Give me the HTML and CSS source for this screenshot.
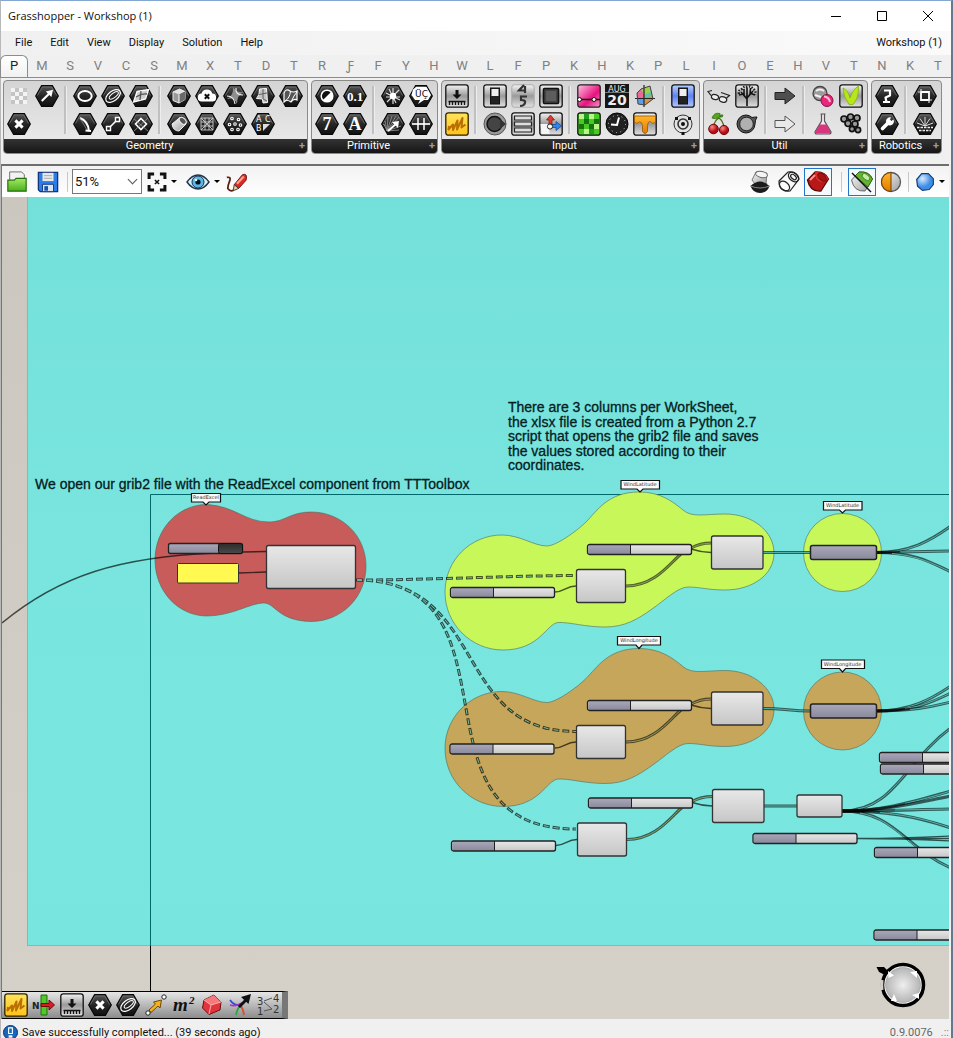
FILE: index.html
```html
<!DOCTYPE html>
<html lang="en">
<head>
<meta charset="utf-8">
<title>Grasshopper - Workshop (1)</title>
<link rel="stylesheet" href="styles.css">
</head>
<body>
<svg class="paints" width="0" height="0" aria-hidden="true">
  <defs>
    <linearGradient id="gHex" x1="0" y1="0" x2="0" y2="1"><stop offset="0" stop-color="#555"/><stop offset=".5" stop-color="#262626"/><stop offset="1" stop-color="#111"/></linearGradient>
    <linearGradient id="gTile" x1="0" y1="0" x2="0" y2="1"><stop offset="0" stop-color="#f4f4f4"/><stop offset=".5" stop-color="#9a9a9a"/><stop offset="1" stop-color="#e2e2e2"/></linearGradient>
    <linearGradient id="gYel" x1="0" y1="0" x2="0" y2="1"><stop offset="0" stop-color="#ffe45c"/><stop offset="1" stop-color="#ffc21a"/></linearGradient>
    <linearGradient id="gPink" x1="0" y1="0" x2="1" y2="1"><stop offset="0" stop-color="#ffc4e2"/><stop offset=".6" stop-color="#e6127e"/><stop offset="1" stop-color="#f79aca"/></linearGradient>
    <linearGradient id="gBlue" x1="0" y1="0" x2="0" y2="1"><stop offset="0" stop-color="#bcd0ff"/><stop offset=".5" stop-color="#5f83f0"/><stop offset="1" stop-color="#b4c6ff"/></linearGradient>
    <linearGradient id="gGreen" x1="0" y1="0" x2="0" y2="1"><stop offset="0" stop-color="#a4e860"/><stop offset="1" stop-color="#4bb01e"/></linearGradient>
    <linearGradient id="gOrange" x1="0" y1="0" x2="0" y2="1"><stop offset="0" stop-color="#ffb52a"/><stop offset="1" stop-color="#e07a00"/></linearGradient>
    <linearGradient id="gSteel" x1="0" y1="0" x2="1" y2="1"><stop offset="0" stop-color="#fafafa"/><stop offset="1" stop-color="#9c9c9c"/></linearGradient>
    <linearGradient id="gNode" x1="0" y1="0" x2="0" y2="1"><stop offset="0" stop-color="#e8e8e8"/><stop offset="1" stop-color="#c6c6c6"/></linearGradient>
    <linearGradient id="gKnob" x1="0" y1="0" x2="0" y2="1"><stop offset="0" stop-color="#aaa9ba"/><stop offset="1" stop-color="#8a899c"/></linearGradient>
    <linearGradient id="gDark" x1="0" y1="0" x2="0" y2="1"><stop offset="0" stop-color="#2c2c2c"/><stop offset="1" stop-color="#4a4a4a"/></linearGradient>
    <linearGradient id="gCyan" x1="0" y1="0" x2="0" y2="1"><stop offset="0" stop-color="#73e0d9"/><stop offset=".5" stop-color="#7ae5df"/><stop offset="1" stop-color="#78e6df"/></linearGradient>
    <radialGradient id="gDial"><stop offset="0" stop-color="#efefef"/><stop offset="1" stop-color="#b5b5b5"/></radialGradient>
    <radialGradient id="gBall" cx=".35" cy=".3"><stop offset="0" stop-color="#d8ecff"/><stop offset="1" stop-color="#3f8ee6"/></radialGradient>
    <radialGradient id="gRed" cx=".35" cy=".3"><stop offset="0" stop-color="#ff8a8a"/><stop offset="1" stop-color="#b80d14"/></radialGradient>
  </defs>
</svg>
<svg class="sprite" aria-hidden="true">
  <symbol id="hex" viewBox="0 0 24 24"><path d="M.7 12 6.6 1.7H17.4L23.3 12 17.4 22.3H6.6Z" fill="url(#gHex)" stroke="#080808" stroke-width="1.2"/><path d="M2.4 11.5 7.3 3H16.7L21.6 11.5" fill="none" stroke="#777" stroke-width=".7"/></symbol>
  <symbol id="tile" viewBox="0 0 24 24"><rect x=".8" y=".8" width="22.4" height="22.4" rx="2.5" fill="url(#gTile)" stroke="#111" stroke-width="1.3"/></symbol>

  <symbol id="checker" viewBox="0 0 24 24"><path d="M4 4h16v16H4z" fill="#fff" opacity=".7"/><path d="M8 4h4v4H8zM16 4h4v4h-4zM4 8h4v4H4zM12 8h4v4h-4zM8 12h4v4H8zM16 12h4v4h-4zM4 16h4v4H4zM12 16h4v4h-4z" fill="#c4c4c4"/></symbol>
  <symbol id="vec" viewBox="0 0 24 24"><use href="#hex"/><path d="M7.500 17.800 6 16.300 12.800 9.600 10.800 7.600 18 5.800 16.400 13 14.300 11Z" fill="#fff"/></symbol>
  <symbol id="cross" viewBox="0 0 24 24"><use href="#hex"/><path d="M8.400 8.400 15.600 15.600M15.600 8.400 8.400 15.600" stroke="#fff" stroke-width="3"/></symbol>
  <symbol id="circ" viewBox="0 0 24 24"><use href="#hex"/><ellipse cx="12" cy="12" rx="6.700" ry="5" fill="none" stroke="#fff" stroke-width="2"/></symbol>
  <symbol id="arc" viewBox="0 0 24 24"><use href="#hex"/><path d="M7 6Q15 9 16 19M12.500 18.500 18 19" fill="none" stroke="#fff" stroke-width="2"/><path d="M7 6 14 18" stroke="#999" stroke-width=".7"/></symbol>
  <symbol id="ellip" viewBox="0 0 24 24"><use href="#hex"/><g transform="rotate(-38 12 12)" fill="none" stroke="#fff"><ellipse cx="12" cy="12" rx="8.500" ry="4.800" stroke-width="1.200"/><ellipse cx="13" cy="12" rx="5.500" ry="2.200" stroke-width="1"/></g></symbol>
  <symbol id="seg" viewBox="0 0 24 24"><use href="#hex"/><path d="M8 16 16 8" stroke="#fff" stroke-width="1.600"/><path d="M5.500 14.500h4v4h-4zM14.500 5.500h4v4h-4z" fill="#222" stroke="#fff" stroke-width="1.400"/></symbol>
  <symbol id="surf" viewBox="0 0 24 24"><use href="#hex"/><path d="M8 7.500 19.500 5.500 16.500 15 4.500 18Z" fill="#ccc" stroke="#fff" stroke-width="1.300"/><path d="M12 7 11 16M7 13Q13 9 18 10" stroke="#555" stroke-width="1.300" fill="none"/></symbol>
  <symbol id="plane" viewBox="0 0 24 24"><use href="#hex"/><path d="M12 6.500 17.500 12 12 17.500 6.500 12Z" fill="#333" stroke="#fff" stroke-width="1.600"/><path d="M5 7 19 19M19 6 5 19" stroke="#999" stroke-width=".8"/></symbol>
  <symbol id="box" viewBox="0 0 24 24"><use href="#hex"/><path d="M6 8 12.500 5 18 7.500V15.500L12 19 6 16.500Z" fill="#999" stroke="#eee"/><path d="M6 8 12.500 5 18 7.500 12 10.500Z" fill="#e4e4e4"/><path d="M12 10.500 18 7.500V15.500L12 19Z" fill="#6a6a6a"/><path d="M12 10.500V19" stroke="#fff"/></symbol>
  <symbol id="cyl" viewBox="0 0 24 24"><use href="#hex"/><path d="M5 12 13 5.500Q20 7 19 12L12 19Q6 19 5 12Z" fill="url(#gSteel)" stroke="#eee"/><ellipse cx="15.700" cy="8.800" rx="4" ry="2.700" transform="rotate(45 15.700 8.800)" fill="#555" stroke="#eee"/></symbol>
  <symbol id="cloud" viewBox="0 0 24 24"><use href="#hex"/><path d="M7 17.500a4 4 0 0 1-.5-8 5.600 5.600 0 0 1 10.800 0A4 4 0 0 1 17 17.500Z" fill="#fff"/><path d="M9.800 10.200 14.200 14.800M14.200 10.200 9.800 14.800" stroke="#111" stroke-width="2"/></symbol>
  <symbol id="mesh" viewBox="0 0 24 24"><use href="#hex"/><path d="M6 6h12v12H6zM6 10h12M6 14h12M10 6v12M14 6v12M6 6 18 18M18 6 6 18" fill="none" stroke="#ccc" stroke-width=".9"/></symbol>
  <symbol id="star" viewBox="0 0 24 24"><use href="#hex"/><path d="M10 3Q13 9 20.500 8 14 11 14 20 11 13 4 15 11 11 10 3Z" fill="#8f8f8f"/><path d="M13 4Q12 11 20 11M4 12Q11 12 12 20" stroke="#eee" stroke-width="1.200" fill="none"/></symbol>
  <symbol id="pts" viewBox="0 0 24 24"><use href="#hex"/><g fill="none" stroke="#fff" stroke-width="1.100"><circle cx="9" cy="6.500" r="1.300"/><circle cx="15.500" cy="7.500" r="1.300"/><circle cx="6.500" cy="12.500" r="1.300"/><circle cx="12" cy="12" r="1.300"/><circle cx="17.500" cy="13" r="1.300"/><circle cx="9" cy="17.500" r="1.300"/><circle cx="15" cy="17.500" r="1.300"/></g></symbol>
  <symbol id="twist" viewBox="0 0 24 24"><use href="#hex"/><path d="M8.500 5 15.500 4.500 16.500 18.500 12 19 11.500 15 5.500 14.500Q9 11 8.500 5Z" fill="#c4c4c4" stroke="#fff"/><path d="M12 5V15L16 17M8 10.500 16 9" stroke="#555" stroke-width=".9" fill="none"/></symbol>
  <symbol id="abc" viewBox="0 0 24 24"><use href="#hex"/><g class="i-sans" fill="#fff" font-size="8"><text x="5" y="10">A</text><text x="14" y="10">C</text><text x="5" y="19">B</text></g><path d="M12 12h7l-7 7z" fill="#ddd"/></symbol>
  <symbol id="brep" viewBox="0 0 24 24"><use href="#hex"/><path d="M5 9Q7 4 11 7 14 9 18 7V16Q15 14 12 18 8 15 5 18Z" fill="#555" stroke="#fff" stroke-width="1.200"/><path d="M6 17Q11 14 11.500 7M12 18Q15 11 18 8" stroke="#fff" fill="none"/></symbol>

  <symbol id="bool" viewBox="0 0 24 24"><use href="#hex"/><circle cx="12" cy="12" r="5.800" fill="#111" stroke="#fff" stroke-width="1.500"/><path d="M16.100 7.900A5.800 5.800 0 0 1 7.900 16.100Z" fill="#fff"/></symbol>
  <symbol id="num" viewBox="0 0 24 24"><use href="#hex"/><text class="i-serif" x="12" y="16.500" font-size="13" text-anchor="middle" fill="#fff">0.1</text></symbol>
  <symbol id="seven" viewBox="0 0 24 24"><use href="#hex"/><text class="i-serif" x="12" y="18" font-size="18" text-anchor="middle" fill="#fff">7</text></symbol>
  <symbol id="txt" viewBox="0 0 24 24"><use href="#hex"/><text class="i-serif" x="12" y="18" font-size="18" text-anchor="middle" fill="#fff">A</text></symbol>
  <symbol id="burst" viewBox="0 0 24 24"><use href="#hex"/><path d="M12 4v16M5 9l14 7M18 6 6 18M5 13h14M8 5l7 14" stroke="#ddd" stroke-width="1.200"/><circle cx="12" cy="12" r="3.200" fill="#fff"/></symbol>
  <symbol id="uc" viewBox="0 0 24 24"><use href="#hex"/><path d="M4 5.500 7 3h10.500l4.500 8-3 5h-4l-6 4 2-4H6L2.500 11Z" fill="#fff"/><text class="i-sans" x="12.500" y="13" font-size="9" text-anchor="middle" fill="#111">ÜÇ</text></symbol>
  <symbol id="ray" viewBox="0 0 24 24"><use href="#hex"/><path d="M6 19 3 12M6 19 4 9M6 19 7 5M6 19 11 4M6 19 15 4M6 19 18 5M6 19 20 14M6 19 18 18M4 14 2 12" stroke="#999" stroke-width=".8"/><path d="M7 19 15 12" stroke="#fff" stroke-width="2"/><path d="M11 10 18 9 17 16Z" fill="#fff"/></symbol>
  <symbol id="dom" viewBox="0 0 24 24"><use href="#hex"/><path d="M3 12h18" stroke="#ddd" stroke-width="2"/><path d="M9 6v12M15 6v12" stroke="#fff" stroke-width="1.500"/></symbol>

  <symbol id="press" viewBox="0 0 24 24"><use href="#tile"/><path d="M10.500 6h3v4.500H16.500L12 15 7.500 10.500H10.500Z" fill="#111"/><path d="M3.500 17.500h17M4.500 18v3M7.500 18v3M10.500 18v3M13.500 18v3M16.500 18v3M19.500 18v3" stroke="#111" stroke-width="1.300"/></symbol>
  <symbol id="doodle" viewBox="0 0 24 24"><rect x=".8" y=".8" width="22.400" height="22.400" rx="2.500" fill="url(#gYel)" stroke="#2c2000" stroke-width="1.300"/><path d="M4 14 3.500 17.500 8 12.500 8 18 12.500 8.500 12 17.500 17.500 6 16.500 15.500 20.500 12.500" fill="none" stroke="#b97000" stroke-width="2" stroke-linejoin="round"/></symbol>
  <symbol id="switch" viewBox="0 0 24 24"><use href="#tile"/><rect x="7.500" y="4" width="9" height="16" fill="#222" stroke="#111"/><rect x="8.500" y="5" width="7" height="7" fill="#eee"/></symbol>
  <symbol id="knob" viewBox="0 0 24 24"><circle cx="12" cy="12" r="11" fill="#999" stroke="#555"/><circle cx="11.500" cy="12" r="7.500" fill="#444" stroke="#111" stroke-width="1.500"/><path d="M17 7 23 12 17 17z" fill="#333"/></symbol>
  <symbol id="digit" viewBox="0 0 24 24"><rect x=".8" y=".8" width="22.400" height="22.400" rx="2.500" fill="url(#gTile)" stroke="#aaa"/><path d="M13 1 8 6.500h7M14 2v7M16 12.500h-6v3.500q5 0 4 3-1 3-5 3" fill="none" stroke="#333" stroke-width="2.200"/></symbol>
  <symbol id="list" viewBox="0 0 24 24"><use href="#tile"/><path d="M3.500 4h17v4h-17zM3.500 10h17v4h-17zM3.500 16h17v4h-17z" fill="#ddd" stroke="#222" stroke-width="1.200"/></symbol>
  <symbol id="panel" viewBox="0 0 24 24"><use href="#tile"/><rect x="4.500" y="4.500" width="15" height="15" rx="1" fill="#444" stroke="#111" stroke-width="1.600"/><rect x="7" y="7" width="10" height="10" fill="#5d5d5d"/></symbol>
  <symbol id="md" viewBox="0 0 24 24"><use href="#tile"/><path d="M1.500 12h9v10h-8z" fill="#f5f5f5"/><path d="M10 13V8H7.500L11.500 3l4 5H13v5" fill="#e23a2a" stroke="#7a150c" stroke-width=".7"/><path d="M13 12.500h4V9.500L22.500 14 17 18.500V15.500h-4" fill="#2e86ee" stroke="#123e82" stroke-width=".7"/><circle cx="11" cy="14.500" r="2.600" fill="#fff" stroke="#222"/></symbol>
  <symbol id="graph" viewBox="0 0 24 24"><rect x=".8" y=".8" width="22.400" height="22.400" rx="2.500" fill="url(#gPink)" stroke="#222" stroke-width="1.300"/><path d="M1 15.500h22" stroke="#111" stroke-width="1.300"/><circle cx="2.500" cy="15.500" r="2" fill="#fff" stroke="#111"/><circle cx="17" cy="15.500" r="2" fill="#fff" stroke="#111"/></symbol>
  <symbol id="pixel" viewBox="0 0 24 24"><rect x=".8" y=".8" width="22.400" height="22.400" rx="2.500" fill="#48c924" stroke="#111" stroke-width="1.300"/><path d="M2 2h5v5H2zM12 2h5v5h-5zM17 12h5v5h-5zM7 17h5v5H7z" fill="#baf58a"/><path d="M7 7h5v5H7zM2 12h5v5H2zM17 7h5v5h-5zM12 12h5v5h-5z" fill="#15720f"/><path d="M12 17h5v5h-5zM7 2h5v5H7z" fill="#1da01a"/></symbol>
  <symbol id="cal" viewBox="0 0 24 24"><path d="M0 0h24v24H0z" fill="#161616"/><path d="M0 8.500h24" stroke="#777"/><text class="i-sans" x="12" y="7.500" font-size="8" text-anchor="middle" fill="#eee">AUG</text><text class="i-bold" x="12" y="21" font-size="14" text-anchor="middle" fill="#eee">20</text></symbol>
  <symbol id="clock" viewBox="0 0 24 24"><circle cx="12" cy="12" r="11" fill="#222" stroke="#050505"/><circle cx="12" cy="12" r="8.500" fill="none" stroke="#ccc" stroke-dasharray="1 3.450"/><path d="M14 5.500 12 13 6 12.500" stroke="#fff" stroke-width="2" fill="none"/></symbol>
  <symbol id="swatch" viewBox="0 0 24 24"><path d="M4 9 8 5 17 2 20 15 12 21 5 20Z" fill="#5ec6a8"/><path d="M8 5 17 2 18 8 11 11Z" fill="#9ccf4e"/><path d="M4 9 8 5 11 11V20L5 20Z" fill="#e86a9a"/><path d="M11 14 19 12 20 15 12 21Z" fill="#ea8d3a"/><path d="M5 15H11V20.500L5 20Z" fill="#5aa0e8"/><path d="M11 1v22M2 14.500h20" stroke="#222" stroke-width="1.200"/><path d="M4 9 8 5 17 2 20 15 12 21 5 20Z" fill="none" stroke="#444"/></symbol>
  <symbol id="honey" viewBox="0 0 24 24"><use href="#tile"/><path d="M1.500 4h21v6q-3 3-5-.5-3 0-3 4v6q-2.500 4-5 0v-6q-1-4-3-3.500-3 3-5 0z" fill="url(#gOrange)" stroke="#9c5600" stroke-width=".8"/></symbol>
  <symbol id="lever" viewBox="0 0 24 24"><rect x=".8" y=".8" width="22.400" height="22.400" rx="2.500" fill="url(#gBlue)" stroke="#111" stroke-width="1.300"/><rect x="7.500" y="4" width="9" height="16" fill="#222" stroke="#111"/><rect x="8.500" y="5" width="7" height="7" fill="#eee"/></symbol>
  <symbol id="target" viewBox="0 0 24 24"><g fill="none" stroke="#333"><circle cx="12" cy="12" r="9"/><circle cx="12" cy="12" r="5" stroke-width="1.600"/></g><circle cx="12" cy="12" r="2" fill="#111"/><path d="M4 5h3v3H4zM17 5h3v3h-3zM10.500 20h3v3h-3z" fill="#111"/></symbol>

  <symbol id="glasses" viewBox="0 0 24 24"><g fill="#fff" fill-opacity=".5" stroke="#222" stroke-width="1.200"><ellipse cx="8" cy="13" rx="3.600" ry="2.500" transform="rotate(15 8 13)"/><ellipse cx="16" cy="15.500" rx="3.800" ry="2.700" transform="rotate(15 16 15.500)"/><path d="M4.500 12 1 7.500 5 6.500M19.500 14 22.500 11.500 14 8.500" fill="none"/></g></symbol>
  <symbol id="cherry" viewBox="0 0 24 24"><path d="M12 6Q7 9 6.500 15M12 6Q16 9 17 15" fill="none" stroke="#4c6b12" stroke-width="1.300"/><path d="M13 5Q8 8 5 6 7 0 13 1.500ZM13 5Q13 2 16 3 16 6 13 5Z" fill="#52a81f" stroke="#2b6a0f" stroke-width=".7"/><circle cx="6.500" cy="17" r="4.800" fill="url(#gRed)" stroke="#70090c"/><circle cx="17" cy="18" r="4.600" fill="url(#gRed)" stroke="#70090c"/></symbol>
  <symbol id="tree" viewBox="0 0 24 24"><use href="#tile"/><path d="M12 22V12M12 15 6 8M12 14 18 7M12 12V4M8 10 4 11M16 9.500 20 11M9 11 9 5M15 10.500 15.500 4" stroke="#111" stroke-width="1.600" fill="none"/><path d="M4 10Q3 6 7 5 9 2 12 3 16 1.500 18 5 21.500 7 20 10.500" fill="none" stroke="#222" stroke-width="2.400" stroke-dasharray="1.500 1.300"/></symbol>
  <symbol id="ring" viewBox="0 0 24 24"><path d="M11 3a9 9 0 1 0 9 9q0-4 2-7-3 0-5 .5A9 9 0 0 0 11 3Z" fill="#555" stroke="#111"/><circle cx="11.500" cy="12" r="6.800" fill="#b0b0b0" stroke="#222"/></symbol>
  <symbol id="arrowD" viewBox="0 0 24 24"><path d="M2 8.500h10V4l10 8-10 8v-4.500H2z" fill="#4f4f4f" stroke="#222"/></symbol>
  <symbol id="arrowL" viewBox="0 0 24 24"><path d="M2 8.500h10V4l10 8-10 8v-4.500H2z" fill="#e9e9e9" stroke="#555"/></symbol>
  <symbol id="pills" viewBox="0 0 24 24"><circle cx="9" cy="9.500" r="7" fill="#9c9c9c" stroke="#444" stroke-width="1.300"/><path d="M5 7Q9 4 13 7M4 11 10 13" stroke="#f2f2f2" stroke-width="2" fill="none"/><circle cx="16" cy="16.500" r="6" fill="#e8267e" stroke="#811043"/><path d="M13 12.500Q18 13 19 18" stroke="#fbc" stroke-width="2" fill="none"/></symbol>
  <symbol id="flask" viewBox="0 0 24 24"><path d="M9.500 2h5M10.500 2v7L4 20q0 2 2 2h12q2 0 2-2L13.500 9V2" fill="#f4e6ee" stroke="#555" stroke-width="1.200"/><path d="M8.500 12.500h7L19.500 20q0 1.500-1.500 1.500H6Q4.500 21.500 4.500 20Z" fill="#d9347f"/></symbol>
  <symbol id="sprout" viewBox="0 0 24 24"><use href="#tile"/><path d="M10 20.500Q4 12 4 4 9 6 11 14 14 5 19.500 2 20 14 14 20.500Z" fill="#b6e61c" stroke="#7eaa0a" stroke-width=".7"/></symbol>
  <symbol id="bubbles" viewBox="0 0 24 24"><g fill="#999" stroke="#111" stroke-width="1.700"><circle cx="5" cy="7" r="3"/><circle cx="11.500" cy="5" r="3"/><circle cx="18" cy="6" r="3"/><circle cx="9" cy="11.500" r="3"/><circle cx="16" cy="12" r="3"/><circle cx="13" cy="17" r="2.600"/><circle cx="19" cy="18" r="2.600"/></g></symbol>
  <symbol id="robot" viewBox="0 0 24 24"><use href="#hex"/><path d="M8 18h7M11.500 18 10.500 13.500 15 11.500V6.500H9" fill="none" stroke="#fff" stroke-width="2.200" stroke-linejoin="round"/></symbol>
  <symbol id="wrench" viewBox="0 0 24 24"><use href="#hex"/><path d="M7.500 16.500 14.500 9.500" stroke="#fff" stroke-width="3.600" stroke-linecap="round"/><path d="M18.500 7.500 15.500 9.500 14.500 8.500 16 5.500A4 4 0 1 0 18.500 7.500Z" fill="#fff"/></symbol>
  <symbol id="frame" viewBox="0 0 24 24"><use href="#hex"/><path d="M8 8h8v8H8z" fill="none" stroke="#fff" stroke-width="1.800"/><path d="M5 8h3M8 5v3M16 16h3M16 16v3" stroke="#ddd" stroke-width="1.200"/></symbol>
  <symbol id="spark" viewBox="0 0 24 24"><use href="#hex"/><path d="M12 14V5M12 14 7 6.500M12 14 17 6.500M12 14 4 11M12 14 20 11" stroke="#ddd" stroke-width="1"/><path d="M4 15.500h16M6 18.500h12" stroke="#eee" stroke-width="1.400" stroke-dasharray="2.500 1"/></symbol>

  <symbol id="open" viewBox="0 0 24 24"><path d="M4 1h13l3 3v12H4z" fill="#f2f2f2" stroke="#666"/><path d="M2 10h7l2-2h11v14H2z" fill="url(#gGreen)" stroke="#27700e" stroke-width="1.300"/></symbol>
  <symbol id="save" viewBox="0 0 24 24"><path d="M1.500 1.500h21v21H3.500l-2-2z" fill="#2e7ce6" stroke="#10357c" stroke-width="1.400"/><path d="M6 2h12v9H6z" fill="#e8e8e8"/><path d="M7.500 5h9M7.500 8h9" stroke="#aaa"/><path d="M6 14.500h12v8H6z" fill="#dbe6f4" stroke="#10357c"/><path d="M8 16.500h4v5H8z" fill="#1551b5"/></symbol>
  <symbol id="fit" viewBox="0 0 24 24"><path d="M2.500 8.500v-6h6M15.500 2.500h6v6M21.500 15.500v6h-6M8.500 21.500h-6v-6" fill="none" stroke="#111" stroke-width="3.600"/><path d="M9.500 9.500 14.500 14.500M14.500 9.500 9.500 14.500" stroke="#111" stroke-width="1.800"/></symbol>
  <symbol id="eye" viewBox="0 0 24 24"><path d="M1 12Q6 5 12 5T23 12Q18 19 12 19T1 12Z" fill="#d8f0fa" stroke="#234" stroke-width="1.400"/><circle cx="12" cy="12" r="6" fill="#5cb8e2" stroke="#135"/><circle cx="12" cy="12" r="2.600" fill="#012"/><circle cx="10" cy="10" r="1.300" fill="#fff"/></symbol>
  <symbol id="pen" viewBox="0 0 24 24"><path d="M10 15 19 4Q25 2 23 10L15 19Z" fill="#d92a24" stroke="#6b1712"/><path d="M13 14 20.500 6" stroke="#f9a090" stroke-width="2.400"/><path d="M10 15 9 21.500 15 19Z" fill="#f0cf98" stroke="#333"/><path d="M2 7Q7 6 5 11T3 19Q6 23 9 21" fill="none" stroke="#5c1d14" stroke-width="1.900"/></symbol>
  <symbol id="shadeOff" viewBox="0 0 24 24"><path d="M4 10 8 2 19 3 18 14H7Z" fill="url(#gSteel)" stroke="#777"/><ellipse cx="13.500" cy="4.500" rx="6" ry="3" transform="rotate(12 13.500 4.500)" fill="#f4f4f4" stroke="#666"/><path d="M2.500 16Q12 7 21.500 16 19 23 12 23T2.500 16Z" fill="#1c1c1c"/><path d="M2.500 16Q12 20 21.500 16" fill="none" stroke="#888"/></symbol>
  <symbol id="shadeWire" viewBox="0 0 24 24"><g fill="none" stroke="#222" stroke-width="1.200"><path d="M2 11 11 2Q20 1 22 9L13 21Q2 22 2 11Z"/><ellipse cx="16.500" cy="7" rx="5.800" ry="4" transform="rotate(40 16.500 7)"/><ellipse cx="16.500" cy="7" rx="3.300" ry="2" transform="rotate(40 16.500 7)"/><ellipse cx="7.500" cy="16" rx="5.800" ry="4" transform="rotate(40 7.500 16)"/></g></symbol>
  <symbol id="shadeRed" viewBox="0 0 24 24"><path d="M1.500 10 9 2Q19 1 22.500 9L15 21Q4 22 1.500 10Z" fill="#b81818" stroke="#5e0808" stroke-width="1.300"/><path d="M9 2Q19 1 22.500 9L15 12Q9 11 9 2Z" fill="#d8302c"/><ellipse cx="16" cy="7" rx="5" ry="3" transform="rotate(40 16 7)" fill="#a81414" stroke="#74100e"/><path d="M4 10 9 5" stroke="#ff9a90" stroke-width="2"/></symbol>
  <symbol id="selGreen" viewBox="0 0 24 24"><path d="M1.500 10 9 2Q19 1 22.500 9L15 21Q4 22 1.500 10Z" fill="url(#gSteel)" stroke="#666"/><path d="M5 6 9 2Q19 1 22.500 9L18 17Z" fill="#62b52e" stroke="#2b6a12"/><ellipse cx="16" cy="7" rx="4.500" ry="2.600" transform="rotate(40 16 7)" fill="#c6eca4" stroke="#2b6a12" stroke-width=".7"/><path d="M2 3 21 22" stroke="#111" stroke-width="1.500"/></symbol>
  <symbol id="half" viewBox="0 0 24 24"><circle cx="12" cy="12" r="9.500" fill="url(#gSteel)" stroke="#555" stroke-width="1.300"/><path d="M12 2.500a9.500 9.500 0 0 0 0 19z" fill="url(#gOrange)" stroke="#6c3a00"/></symbol>
  <symbol id="ball" viewBox="0 0 24 24"><path d="M8 2h8l6 6v7l-5 6-8 1-6-5-1-8Z" fill="url(#gBall)" stroke="#123c78" stroke-width="1.400"/></symbol>

  <symbol id="normal" viewBox="0 0 24 24"><text class="i-bold" x="0" y="16" font-size="9" fill="#222">N</text><path d="M9 2h6v20H9z" fill="#4fc828" stroke="#1e6b10"/><path d="M9 10.500h8V7l5.500 5-5.500 5v-3.500H9z" fill="#d81e1e" stroke="#6c0a0a"/></symbol>
  <symbol id="link" viewBox="0 0 24 24"><path d="M7 19.500 5 17 11.500 11 9.500 9 17.500 7 16 15 14 13Z" fill="#f5b21c" stroke="#6d4800"/><g fill="#fff" stroke="#222"><circle cx="4" cy="20" r="2.200"/><circle cx="20" cy="4" r="2.200"/></g></symbol>
  <symbol id="area" viewBox="0 0 24 24"><text class="i-ital" x="1" y="18" font-size="19" fill="#111">m</text><text class="i-ital" x="17" y="11" font-size="11" fill="#111">2</text></symbol>
  <symbol id="gem" viewBox="0 0 24 24"><path d="M4 7 14 2 21 9 20 17 9 21.500 2.500 15Z" fill="#e2343c" stroke="#6b0d12"/><path d="M4 7 14 2 21 9 11 12Z" fill="#f47a7c"/><path d="M4 7 11 12 21 9M11 12 9 21" stroke="#ffaaaa" fill="none"/></symbol>
  <symbol id="flow" viewBox="0 0 24 24"><g fill="none" stroke-width="1.800"><path d="M2 7Q7 14 13 11" stroke="#2a4de0"/><path d="M2 12Q8 14 14 10" stroke="#b12bd0"/><path d="M8 22Q9 15 14 11" stroke="#2ba83a"/><path d="M16 22Q15 15 12 12" stroke="#e04a2a"/><path d="M11 14 19 6" stroke="#111" stroke-width="3"/></g><path d="M13 4 23 1 20.500 11z" fill="#111"/></symbol>
  <symbol id="cross34" viewBox="0 0 24 24"><g class="i-sans" font-size="10" fill="#333"><text x="1" y="12">3</text><text x="17" y="9">4</text><text x="1" y="22">1</text><text x="17" y="20">2</text></g><path d="M8 8 16 5M8 9 16 16M8 18 16 16" stroke="#555"/></symbol>
</svg>

<div class="window">
  <header class="titlebar">
    <h1 class="title">Grasshopper - Workshop (1)</h1>
    <div class="win-buttons">
      <button class="win-btn" aria-label="Minimize"><svg viewBox="0 0 12 12"><path d="M1 6.500h10"/></svg></button>
      <button class="win-btn" aria-label="Maximize"><svg viewBox="0 0 12 12"><path d="M1.500 1.500h9v9h-9z"/></svg></button>
      <button class="win-btn" aria-label="Close"><svg viewBox="0 0 12 12"><path d="M1 1 11 11M11 1 1 11"/></svg></button>
    </div>
  </header>

  <nav class="menubar">
    <button>File</button><button>Edit</button><button>View</button><button>Display</button><button>Solution</button><button>Help</button>
    <span class="doc-name">Workshop (1)</span>
  </nav>

  <div class="tabs" role="tablist">
    <button class="tab active" role="tab" aria-selected="true">P</button><button class="tab" role="tab">M</button><button class="tab" role="tab">S</button><button class="tab" role="tab">V</button><button class="tab" role="tab">C</button><button class="tab" role="tab">S</button><button class="tab" role="tab">M</button><button class="tab" role="tab">X</button><button class="tab" role="tab">T</button><button class="tab" role="tab">D</button><button class="tab" role="tab">T</button><button class="tab" role="tab">R</button><button class="tab" role="tab">Ƒ</button><button class="tab" role="tab">F</button><button class="tab" role="tab">Y</button><button class="tab" role="tab">H</button><button class="tab" role="tab">W</button><button class="tab" role="tab">L</button><button class="tab" role="tab">F</button><button class="tab" role="tab">P</button><button class="tab" role="tab">K</button><button class="tab" role="tab">H</button><button class="tab" role="tab">K</button><button class="tab" role="tab">P</button><button class="tab" role="tab">L</button><button class="tab" role="tab">I</button><button class="tab" role="tab">O</button><button class="tab" role="tab">E</button><button class="tab" role="tab">H</button><button class="tab" role="tab">V</button><button class="tab" role="tab">T</button><button class="tab" role="tab">N</button><button class="tab" role="tab">K</button><button class="tab" role="tab">T</button>
  </div>

  <div class="ribbon">
    <section class="group">
      <div class="group-icons">
        <div class="cluster"><button aria-label="Geometry"><svg><use href="#checker"/></svg></button><button aria-label="Point"><svg><use href="#cross"/></svg></button><button aria-label="Vector"><svg><use href="#vec"/></svg></button></div>
        <div class="cluster"><button aria-label="Circle"><svg><use href="#circ"/></svg></button><button aria-label="Arc"><svg><use href="#arc"/></svg></button><button aria-label="Curve"><svg><use href="#ellip"/></svg></button><button aria-label="Line"><svg><use href="#seg"/></svg></button><button aria-label="Rectangle"><svg><use href="#surf"/></svg></button><button aria-label="Plane"><svg><use href="#plane"/></svg></button></div>
        <div class="cluster"><button aria-label="Box"><svg><use href="#box"/></svg></button><button aria-label="Brep"><svg><use href="#cyl"/></svg></button><button aria-label="Cloud"><svg><use href="#cloud"/></svg></button><button aria-label="Mesh"><svg><use href="#mesh"/></svg></button><button aria-label="Field"><svg><use href="#star"/></svg></button><button aria-label="Group"><svg><use href="#pts"/></svg></button><button aria-label="Twisted box"><svg><use href="#twist"/></svg></button><button aria-label="Cache"><svg><use href="#abc"/></svg></button><button aria-label="Surface"><svg><use href="#brep"/></svg></button></div>
      </div>
      <h2 class="group-name">Geometry</h2>
    </section>
    <section class="group">
      <div class="group-icons">
        <div class="cluster"><button aria-label="Boolean"><svg><use href="#bool"/></svg></button><button aria-label="Integer"><svg><use href="#seven"/></svg></button><button aria-label="Number"><svg><use href="#num"/></svg></button><button aria-label="Text"><svg><use href="#txt"/></svg></button></div>
        <div class="cluster"><button aria-label="Colour"><svg><use href="#burst"/></svg></button><button aria-label="Matrix"><svg><use href="#ray"/></svg></button><button aria-label="Culture"><svg><use href="#uc"/></svg></button><button aria-label="Domain"><svg><use href="#dom"/></svg></button></div>
      </div>
      <h2 class="group-name">Primitive</h2>
    </section>
    <section class="group">
      <div class="group-icons">
        <div class="cluster"><button aria-label="Button"><svg><use href="#press"/></svg></button><button aria-label="Sketch"><svg><use href="#doodle"/></svg></button></div>
        <div class="cluster"><button aria-label="Toggle"><svg><use href="#switch"/></svg></button><button aria-label="Knob"><svg><use href="#knob"/></svg></button><button aria-label="Digits"><svg><use href="#digit"/></svg></button><button aria-label="Value list"><svg><use href="#list"/></svg></button><button aria-label="Panel"><svg><use href="#panel"/></svg></button><button aria-label="MD slider"><svg><use href="#md"/></svg></button></div>
        <div class="cluster"><button aria-label="Gradient"><svg><use href="#graph"/></svg></button><button aria-label="Image"><svg><use href="#pixel"/></svg></button><button aria-label="Calendar"><svg><use href="#cal"/></svg></button><button aria-label="Clock"><svg><use href="#clock"/></svg></button><button aria-label="Swatch"><svg><use href="#swatch"/></svg></button><button aria-label="Pipette"><svg><use href="#honey"/></svg></button></div>
        <div class="cluster"><button aria-label="Switch"><svg><use href="#lever"/></svg></button><button aria-label="Atom"><svg><use href="#target"/></svg></button></div>
      </div>
      <h2 class="group-name">Input</h2>
    </section>
    <section class="group">
      <div class="group-icons">
        <div class="cluster"><button aria-label="Viewer"><svg><use href="#glasses"/></svg></button><button aria-label="Cherry picker"><svg><use href="#cherry"/></svg></button><button aria-label="Tree"><svg><use href="#tree"/></svg></button><button aria-label="Relay"><svg><use href="#ring"/></svg></button></div>
        <div class="cluster"><button aria-label="Data input"><svg><use href="#arrowD"/></svg></button><button aria-label="Data output"><svg><use href="#arrowL"/></svg></button></div>
        <div class="cluster"><button aria-label="Galapagos"><svg><use href="#pills"/></svg></button><button aria-label="Flask"><svg><use href="#flask"/></svg></button><button aria-label="Sprout"><svg><use href="#sprout"/></svg></button><button aria-label="Cluster"><svg><use href="#bubbles"/></svg></button></div>
      </div>
      <h2 class="group-name">Util</h2>
    </section>
    <section class="group">
      <div class="group-icons">
        <div class="cluster"><button aria-label="Robot"><svg><use href="#robot"/></svg></button><button aria-label="Tool"><svg><use href="#wrench"/></svg></button></div>
        <div class="cluster"><button aria-label="Frame"><svg><use href="#frame"/></svg></button><button aria-label="Target"><svg><use href="#spark"/></svg></button></div>
      </div>
      <h2 class="group-name">Robotics</h2>
    </section>
  </div>

  <div class="toolbar">
    <button class="tool" aria-label="Open"><svg><use href="#open"/></svg></button>
    <button class="tool save" aria-label="Save"><svg><use href="#save"/></svg></button>
    <span class="sep"></span>
    <span class="zoom-box"><select class="zoom-level" aria-label="Zoom"><option>51%</option></select></span>
    <button class="tool drop" aria-label="Zoom extents"><svg><use href="#fit"/></svg></button>
    <button class="tool drop eye" aria-label="Preview"><svg><use href="#eye"/></svg></button>
    <button class="tool" aria-label="Sketch"><svg><use href="#pen"/></svg></button>
    <span class="spacer"></span>
    <button class="tool boxed" aria-label="No preview"><svg><use href="#shadeOff"/></svg></button>
    <button class="tool boxed" aria-label="Wireframe preview"><svg><use href="#shadeWire"/></svg></button>
    <button class="tool boxed on" aria-label="Shaded preview"><svg><use href="#shadeRed"/></svg></button>
    <span class="sep wide"></span>
    <button class="tool boxed on" aria-label="Selected only"><svg><use href="#selGreen"/></svg></button>
    <button class="tool boxed" aria-label="Document preview"><svg><use href="#half"/></svg></button>
    <span class="sep tight"></span>
    <button class="tool drop last" aria-label="Mesh quality"><svg><use href="#ball"/></svg></button>
  </div>

  <main class="canvas">
    <svg class="graph" aria-label="Definition canvas">
      <defs>
        <path id="blob" d="M502 535C520 535 534 546 547 546 556 546 577 531 586 522 597 511 608 492 639 492 660 492 672 501 683 510 692 518 705 514 725 514 752 514 774 531 774 553 774 575 752 590 725 590 708 590 700 587 688 587 678 587 665 600 652 609 638 619 625 627 605 627 585 627 570 622 558 622.500 546 624 540 650 503 650 471 650 445 624 445 592 445 560 471 535 502 535Z"/>
        <g id="slider"><rect width="104" height="10" rx="2" fill="url(#gNode)"/><path d="M1 0H43V10H1Z" fill="url(#gKnob)"/><path d="M43 0V10" stroke="#222"/><rect class="edge" width="104" height="10" rx="2"/></g>
        <g id="pair"><path class="w2" d="M691 548Q700 543 711 543M626 586C655 586 670 563 681 554"/><path class="w2i" d="M691 548Q700 543 711 543M626 586C655 586 670 563 681 554"/><path class="w" d="M691 549Q700 552 711 552.500M555 592C564 592 566 586 576 586"/><use href="#slider" x="587.500" y="544.500"/><rect class="node" x="576.500" y="569.500" width="49" height="33" rx="2"/><rect class="node" x="711.500" y="536" width="51.500" height="33" rx="2"/></g>
      </defs>
      <g transform="translate(-2 -197)">
        <rect x="27.500" y="190" width="3000" height="755.500" fill="url(#gCyan)" stroke="#86b9b2"/>
        <path class="scribble" d="M150.500 991V494.500H3000"/>
        <path d="M150.500 946V991" stroke="#000"/>
        <path class="blob red" d="M207 504.500C235 506 245 522 269 522 285 522 290 512 311 512 342 512 366 536 366 566 366 597 342 621.500 311 621.500 278 621 275 603 264 603 250 603 232 616 207 616 178 616 155 591 155 560 155 529 178 504.500 207 504.500Z"/>
        <use href="#blob" class="blob green"/>
        <use href="#blob" y="156.500" class="blob brown"/>
        <circle class="blob green" cx="842.500" cy="552.500" r="39"/>
        <circle class="blob brown" cx="842.500" cy="711" r="39"/>

        <path class="w" d="M2 623C60 575 120 557 215 553M243 552 266 551.500M239 573 266 572"/>
        <path class="dash" d="M356 580C430 580 500 576 576 575.500M356 580C490 580 450 731.500 576 731.500M356 580C530 580 400 829 576 829"/>
        <path class="dash-in" d="M356 580C430 580 500 576 576 575.500M356 580C490 580 450 731.500 576 731.500M356 580C530 580 400 829 576 829"/>
        <path class="w2" d="M763 552.500H810M763 708.500C785 708.500 790 711 810 711M763 806H797"/>
        <path class="w2i" d="M763 552.500H810M763 708.500C785 708.500 790 711 810 711M763 806H797"/>
        <path class="w2" d="M876 552.500C910 552.500 930 541 951 526"/><path class="w2i" d="M886 552C912 551 930 541 951 526"/>
        <path class="w2" d="M876 552.500 951 551"/><path class="w2i" d="M900 552 951 551"/>
        <path class="w2" d="M876 552.500C915 552.500 930 562 951 572"/><path class="w2i" d="M892 553.500C918 556 932 563 951 572"/>
        <path class="w2" d="M876 711C910 711 930 700 951 686"/><path class="w2i" d="M892 710C913 708 931 699 951 686"/>
        <path class="w2" d="M876 711C915 711 930 703 951 693"/><path class="w2i" d="M905 708.500C923 706 933 701 951 693"/>
        <path class="w2" d="M876 711C915 711 930 707 951 702"/><path class="w2i" d="M910 709.500C925 708 933 706 951 702"/>
        <path class="w2" d="M842 811C895 811 905 761 951 728"/><path class="w2i" d="M858 809C895 802 908 760 951 728"/>
        <path class="w2" d="M842 811C885 811 915 801 951 791"/><path class="w2i" d="M905 803.500C920 800 935 796 951 791"/>
        <path class="w2" d="M842 811C885 811 915 803 951 796"/>
        <path class="w2" d="M842 811C885 811 915 809.500 951 809"/><path class="w2i" d="M895 810 951 809"/>
        <path class="w2" d="M842 811C885 811 915 816 951 828"/><path class="w2i" d="M880 812.500C905 815 925 819 951 828"/>
        <path class="w2" d="M842 811C895 811 905 848 951 868"/><path class="w2i" d="M860 813C895 819 908 849 951 868"/>
        <path class="w" d="M857 838.500C890 838.500 920 837.500 951 836M857 838.500C890 838.500 920 838 951 838.500M857 838.500C890 838.500 920 839.500 951 841"/>

        <rect x="168.500" y="543.500" width="74" height="10" rx="2" fill="url(#gKnob)"/><rect class="edge" x="168.500" y="543.500" width="74" height="10" rx="2"/><rect x="218.500" y="543.500" width="24" height="10" rx="2" fill="url(#gDark)" stroke="#111"/>
        <rect x="177.500" y="563.500" width="61" height="19.500" rx="1" fill="#fff952" stroke="#333"/>
        <rect class="node" x="266.500" y="545.500" width="89" height="43" rx="2"/>

        <use href="#pair"/>
        <use href="#slider" x="450.500" y="587.500"/>
        <use href="#pair" y="156"/>
        <use href="#slider" x="450" y="744"/>
        <use href="#pair" x="1" y="253.500"/>
        <use href="#slider" x="451.500" y="841"/>
        <rect class="node" x="797" y="795" width="45" height="22" rx="2"/>
        <use href="#slider" x="753" y="833.500"/>
        <rect class="value" x="810.500" y="545.500" width="66" height="14" rx="2"/>
        <rect class="value" x="810.500" y="704" width="66" height="14" rx="2"/>
        <use href="#slider" x="879.500" y="752.500"/><use href="#slider" x="880.500" y="764"/><use href="#slider" x="874.500" y="847.500"/><use href="#slider" x="874" y="930"/>

        <g class="tag"><path d="M191.500 493.500H220.500V502H209L206 505 203 502H191.500Z"/><text x="206" y="499">ReadExcel</text></g>
        <g class="tag"><path d="M621 480.500H659.500V489H643L640 492 637 489H621Z"/><text x="640" y="486">WindLatitude</text></g>
        <g class="tag"><path d="M617.500 636.500H660.500V645H642L639 648.500 636 645H617.500Z"/><text x="639" y="642">WindLongitude</text></g>
        <g class="tag"><path d="M823.500 501.500H862V510H845.500L842.500 513 839.500 510H823.500Z"/><text x="842.500" y="507">WindLatitude</text></g>
        <g class="tag"><path d="M821.500 660H864.500V668.500H845.500L842.500 672 839.500 668.500H821.500Z"/><text x="842.500" y="666">WindLongitude</text></g>

        <g class="note">
          <text x="35" y="489">We open our grib2 file with the ReadExcel component from TTToolbox</text>
          <text x="508" y="412">There are 3 columns per WorkSheet,</text>
          <text x="508" y="427">the xlsx file is created from a Python 2.7</text>
          <text x="508" y="441">script that opens the grib2 file and saves</text>
          <text x="508" y="456">the values stored according to their</text>
          <text x="508" y="470">coordinates.</text>
        </g>
      </g>
    </svg>

    <div class="recent">
      <button aria-label="Sketch"><svg><use href="#doodle"/></svg></button><button aria-label="Normal"><svg><use href="#normal"/></svg></button><button aria-label="Button"><svg><use href="#press"/></svg></button><button aria-label="Point"><svg><use href="#cross"/></svg></button><button aria-label="Curve"><svg><use href="#ellip"/></svg></button><button aria-label="Vector 2Pt"><svg><use href="#link"/></svg></button><button aria-label="Area"><svg><use href="#area"/></svg></button><button aria-label="Custom preview"><svg><use href="#gem"/></svg></button><button aria-label="Field"><svg><use href="#flow"/></svg></button><button aria-label="Cross reference"><svg><use href="#cross34"/></svg></button>
    </div>

    <svg class="dial" viewBox="0 0 52 52" aria-label="Compass">
      <circle cx="28" cy="28" r="20.500" fill="#fff" stroke="#000" stroke-width="3.500"/>
      <circle cx="28" cy="28" r="17.500" fill="url(#gDial)" stroke="#999" stroke-width=".6"/>
      <path d="M13 14 19 18.500 13.500 21ZM42 14 42 21 35 15ZM44 42 37 38 44 36ZM16 44 19 37 22 44Z" fill="#fff"/>
      <path d="M1.500 10 9 10 13 14 9 17.500 4 15Z" fill="#000"/>
      <path d="M7 23Q6.500 28 7 33" stroke="#d3cfc6" stroke-width="3" fill="none"/>
    </svg>
  </main>

  <footer class="status">
    <svg class="status-icon" viewBox="0 0 16 16"><circle cx="8" cy="8" r="7.500" fill="#1768b8" stroke="#0a2f66"/><path d="M6 3h4v6H6z" fill="none" stroke="#fff" stroke-width="1.200"/><path d="M6 11h4v2.500H6z" fill="#fff"/></svg>
    <span>Save successfully completed... (39 seconds ago)</span>
    <span class="version">0.9.0076</span>
    <span class="grip">.::</span>
  </footer>
</div>
</body>
</html>
```
FILE: styles.css
```css
* { box-sizing: border-box; }
html, body { height: 100%; }
body { margin: 0; font: 11px/16px Roboto, "Noto Sans", sans-serif; color: #111; overflow: hidden; }
button { border: 0; padding: 0; margin: 0; background: none; font: inherit; color: inherit; display: flex; align-items: center; justify-content: center; }
h1, h2 { margin: 0; font: inherit; }
.paints { position: absolute; }
.sprite { display: none; }

.window { height: 100%; display: flex; flex-direction: column; background: #f0f0f0; border-top: 1px solid #83a6d3; border-left: 1px solid #b8b8b8; border-right: 2px solid #67788c; }

.titlebar { height: 30px; flex: none; background: #fff; display: flex; align-items: center; justify-content: space-between; padding-left: 7px; }
.title { font-family: "Open Sans", sans-serif; font-size: 11px; }
.win-buttons { display: flex; }
.win-btn { width: 46px; height: 30px; }
.win-btn svg { width: 12px; height: 12px; fill: none; stroke: #000; stroke-width: 1; }

.menubar { height: 24px; flex: none; display: flex; align-items: center; gap: 18px; padding: 0 9px 0 14px; background: linear-gradient(90deg, #f0f0f0, #fafafa); }
.doc-name { margin-left: auto; }

.tabs { height: 23px; flex: none; display: flex; overflow: hidden; border-bottom: 1px solid #8c8c8c; margin-left: -1px; }
.tab { flex: 0 0 28px; height: 22px; font-size: 13px; color: #808080; }
.tab.active { height: 23px; color: #222; background: linear-gradient(#fff, #f0f0f0); border: 1px solid #8c8c8c; border-bottom: 0; border-radius: 6px 6px 0 0; padding-bottom: 3px; }

.ribbon { height: 86px; flex: none; display: flex; align-items: flex-start; gap: 3px; padding: 2px 2px 0; }
.group { border: 1px solid #8a8a8a; border-radius: 4px; overflow: hidden; background: linear-gradient(#d4d4d4, #ededed); }
.group-icons { display: flex; gap: 10px; padding: 1px 2px 1px 1px; }
.cluster { display: grid; grid-auto-flow: column; grid-template-rows: 28px 28px; grid-auto-columns: 28px; position: relative; }
.cluster + .cluster::before { content: ""; position: absolute; left: -7px; top: 4px; bottom: 4px; width: 2px; background: #c0c0c0; border-right: 1px solid #eee; }
.cluster svg, .recent svg { width: 24px; height: 24px; }
.group-name { position: relative; height: 14px; background: linear-gradient(#333, #161616); color: #fff; text-align: center; line-height: 14px; padding-right: 12px; }
.group-name::after { content: "+"; position: absolute; right: 2px; top: 0; color: #999; font-weight: bold; }

.toolbar { height: 33px; flex: none; display: flex; align-items: center; padding: 0 1px 0 4px; background: linear-gradient(#f2f2f2, #fff); border-top: 2px solid #6e6e6e; border-left: 1px solid #777; margin-right: 2px; }
.tool { width: 22px; height: 28px; flex: none; }
.tool svg { width: 22px; height: 22px; }
.save { margin-left: 9px; }
.sep { width: 1px; height: 20px; background: #c8c8c8; margin: 0 4px 0 8px; }
.sep.wide { margin: 0 5px 0 9px; }
.sep.tight { margin-left: 3px; }
.zoom-box { position: relative; margin-right: 5px; }
.zoom-box::after { content: ""; position: absolute; right: 6px; top: 7px; width: 6px; height: 6px; border: solid #555; border-width: 0 1px 1px 0; transform: rotate(45deg); pointer-events: none; }
.zoom-level { appearance: none; display: block; width: 70px; height: 25px; border: 1px solid #777; border-radius: 0; background: #fff; font: 13px Roboto, sans-serif; padding: 0 2px; color: #111; }
.drop { width: 39px; justify-content: flex-start; }
.drop::after { content: ""; border: 3px solid transparent; border-top-color: #000; border-bottom: 0; margin-left: 4px; }
.drop svg { width: 20px; height: 20px; }
.drop.eye svg { width: 24px; height: 24px; }
.drop.last { width: 33px; margin-left: 2px; }
.spacer { flex: 1; }
.boxed { width: 28px; height: 28px; border: 1px solid transparent; margin-left: 1px; }
.boxed svg { width: 24px; height: 24px; }
.boxed.on { border-color: #2176c7; background: #f4f9fe; }

.canvas { flex: 1; min-height: 0; position: relative; overflow: hidden; background: linear-gradient(#cbc7be, #d5d1c9); border-left: 1px solid #777; margin-right: 2px; }
.graph { width: 100%; height: 100%; display: block; }
.node { fill: url(#gNode); stroke: #333; stroke-width: 1.3px; }
.value { fill: url(#gKnob); stroke: #222; stroke-width: 1.5px; }
.edge { fill: none; stroke: #222; stroke-width: 1.3px; }
.blob { stroke: #4f6b5c; stroke-opacity: .6; stroke-width: 1px; }
.red { fill: #c85c5b; }
.green { fill: #c8f75a; }
.brown { fill: #c6a65a; }
.w { fill: none; stroke: #000; stroke-opacity: .65; stroke-width: 1.4px; }
.w2 { fill: none; stroke: #000; stroke-opacity: .6; stroke-width: 3px; }
.w2i { fill: none; stroke: #55b0a8; stroke-width: 1px; }
#pair .w2i { stroke: #8fa060; }
.dash { fill: none; stroke: #000; stroke-opacity: .66; stroke-width: 3px; stroke-dasharray: 7 3; }
.dash-in { fill: none; stroke: #74c2a6; stroke-width: 1px; stroke-dasharray: 5 5; stroke-dashoffset: -1px; }
.scribble { fill: none; stroke: #00686a; }
.tag path { fill: #fafafa; stroke: #111; stroke-width: 1.2px; }
.tag text { font: 5px "DejaVu Sans", sans-serif; fill: #333; text-anchor: middle; }
.note { font: 14px "Liberation Sans", Arial, sans-serif; fill: #04201f; stroke: #04201f; stroke-width: .3px; }

.recent { position: absolute; left: 0; bottom: 0; display: flex; height: 28px; align-items: center; background: linear-gradient(#e6e6e6, #8c8c8c); border: 1px solid #000; border-left: 0; border-right: 6px solid #777; }
.recent button { width: 28px; height: 26px; }
.dial { position: absolute; right: 22px; bottom: 10px; width: 52px; height: 52px; }

.status { height: 19px; flex: none; display: flex; align-items: flex-start; gap: 4px; padding: 6px 2px 0; overflow: hidden; }
.status-icon { width: 15px; height: 15px; flex: none; }
.version { margin: 0 4px 0 auto; color: #666; }
.grip { color: #888; }

.i-sans { font-family: "DejaVu Sans", sans-serif; }
.i-bold { font-family: "DejaVu Sans", sans-serif; font-weight: bold; }
.i-serif { font-family: "Liberation Serif", serif; font-weight: bold; }
.i-ital { font-family: "Liberation Serif", serif; font-weight: bold; font-style: italic; }
```
